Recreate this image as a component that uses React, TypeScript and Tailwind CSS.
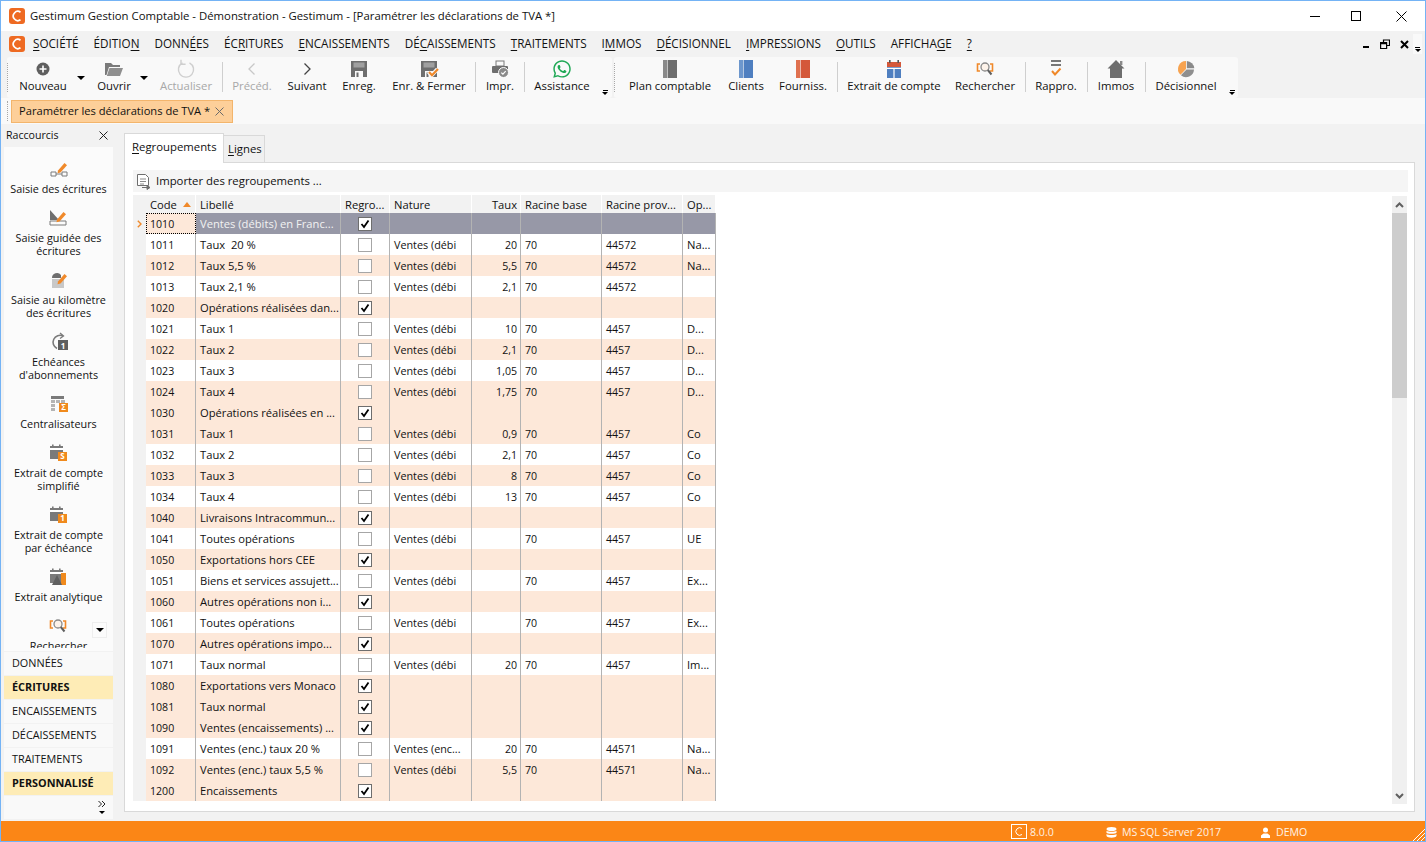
import type { ReactNode } from 'react'
import { FaWhatsapp } from 'react-icons/fa'

type Row = [string, string, boolean, string, string, string, string, string, boolean]

const rows: Row[] = [
  ['1011', 'Taux  20 %', false, 'Ventes (débi', '20', '70', '44572', 'Na...', false],
  ['1012', 'Taux 5,5 %', false, 'Ventes (débi', '5,5', '70', '44572', 'Na...', true],
  ['1013', 'Taux 2,1 %', false, 'Ventes (débi', '2,1', '70', '44572', '', false],
  ['1020', 'Opérations réalisées dan...', true, '', '', '', '', '', true],
  ['1021', 'Taux 1', false, 'Ventes (débi', '10', '70', '4457', 'D...', false],
  ['1022', 'Taux 2', false, 'Ventes (débi', '2,1', '70', '4457', 'D...', true],
  ['1023', 'Taux 3', false, 'Ventes (débi', '1,05', '70', '4457', 'D...', false],
  ['1024', 'Taux 4', false, 'Ventes (débi', '1,75', '70', '4457', 'D...', true],
  ['1030', 'Opérations réalisées en ...', true, '', '', '', '', '', true],
  ['1031', 'Taux 1', false, 'Ventes (débi', '0,9', '70', '4457', 'Co', true],
  ['1032', 'Taux 2', false, 'Ventes (débi', '2,1', '70', '4457', 'Co', false],
  ['1033', 'Taux 3', false, 'Ventes (débi', '8', '70', '4457', 'Co', true],
  ['1034', 'Taux 4', false, 'Ventes (débi', '13', '70', '4457', 'Co', false],
  ['1040', 'Livraisons Intracommun...', true, '', '', '', '', '', true],
  ['1041', 'Toutes opérations', false, 'Ventes (débi', '', '70', '4457', 'UE', false],
  ['1050', 'Exportations hors CEE', true, '', '', '', '', '', true],
  ['1051', 'Biens et services assujett...', false, 'Ventes (débi', '', '70', '4457', 'Ex...', false],
  ['1060', 'Autres opérations non i...', true, '', '', '', '', '', true],
  ['1061', 'Toutes opérations', false, 'Ventes (débi', '', '70', '4457', 'Ex...', false],
  ['1070', 'Autres opérations impo...', true, '', '', '', '', '', true],
  ['1071', 'Taux normal', false, 'Ventes (débi', '20', '70', '4457', 'Im...', false],
  ['1080', 'Exportations vers Monaco', true, '', '', '', '', '', true],
  ['1081', 'Taux normal', true, '', '', '', '', '', true],
  ['1090', 'Ventes (encaissements) ...', true, '', '', '', '', '', true],
  ['1091', 'Ventes (enc.) taux 20 %', false, 'Ventes (enc...', '20', '70', '44571', 'Na...', false],
  ['1092', 'Ventes (enc.) taux 5,5 %', false, 'Ventes (débi', '5,5', '70', '44571', 'Na...', true],
  ['1200', 'Encaissements', true, '', '', '', '', '', true],
]

const Logo = () => (
  <svg width="16" height="16" viewBox="0 0 16 16">
    <rect width="16" height="16" rx="3" fill="#ee6a22" />
    <path d="M11.5 4.2A4.6 4.6 0 1 0 11.5 11.8" fill="none" stroke="#fff" strokeWidth="1.7" />
  </svg>
)

const Icon = ({ children }: { children: ReactNode }) => (
  <svg width="20" height="20" viewBox="0 0 20 20" className="shrink-0">
    {children}
  </svg>
)

const Floppy = () => (
  <>
    <rect x="2" y="2" width="16" height="16" fill="#6e6e6e" />
    <rect x="4.500" y="3.500" width="11" height="5" fill="#a0a0a0" />
    <rect x="6" y="12" width="8" height="6" fill="#f9f9f9" />
    <rect x="7.500" y="13.500" width="2" height="4.500" fill="#6e6e6e" />
  </>
)

const Pen = () => <path d="M9 11.5 15.5 4 18 6.2 11.5 13.5 8.5 14.3Z" fill="#f0892a" />

const Calendar = () => (
  <>
    <rect x="2" y="3" width="13" height="13" fill="#7a7a7a" />
    <rect x="2" y="5" width="13" height="2" fill="#fff" />
    <rect x="4" y="1.5" width="1.6" height="3" fill="#7a7a7a" />
    <rect x="11" y="1.5" width="1.6" height="3" fill="#7a7a7a" />
  </>
)

const Search = () => (
  <>
    <path d="M5 5H2.500v7H5M15 5h2.500v7H15" fill="none" stroke="#f0892a" strokeWidth="1.600" />
    <circle cx="10" cy="8" r="4" fill="#fdf3ea" stroke="#8a8a8a" strokeWidth="1.300" />
    <path d="m12.800 11 3.700 4.500" stroke="#5f5f5f" strokeWidth="2" />
  </>
)

const Badge = ({ label }: { label: string }) => (
  <>
    <rect x="10" y="9" width="9" height="9" fill="#f08a1d" />
    <text x="14.5" y="16.4" textAnchor="middle" fontSize="8" fontWeight="700" fill="#fff">
      {label}
    </text>
  </>
)

const toolIcons = {
  plus: (
    <Icon>
      <circle cx="10" cy="10" r="6.500" fill="#5f5f5f" />
      <path d="M10 6.500v7M6.500 10h7" stroke="#fff" strokeWidth="1.600" />
    </Icon>
  ),
  folder: (
    <Icon>
      <path d="M1 4h6l2 2h7v2H5L2.500 16H1z" fill="#7a7a7a" />
      <path d="M5.500 9H19l-3 8H2.800z" fill="#8f8f8f" />
    </Icon>
  ),
  refresh: (
    <Icon>
      <path d="M6.500 3.800a7.600 7.600 0 1 0 7 0" fill="none" stroke="#cfcfcf" strokeWidth="1.400" />
      <path d="M5 .8v4.400h4.600" fill="none" stroke="#cfcfcf" strokeWidth="1.400" />
    </Icon>
  ),
  prev: (
    <Icon>
      <path d="m12.500 4.500-5.500 5.500 5.500 5.500" fill="none" stroke="#c8c8c8" strokeWidth="1.300" />
    </Icon>
  ),
  next: (
    <Icon>
      <path d="m7.500 4.500 5.500 5.500-5.500 5.500" fill="none" stroke="#444" strokeWidth="1.300" />
    </Icon>
  ),
  save: (
    <Icon>
      <Floppy />
    </Icon>
  ),
  saveClose: (
    <Icon>
      <Floppy />
      <path d="m9.500 13 3.200 3.400L18.500 10" fill="none" stroke="#f9f9f9" strokeWidth="4" />
      <path d="m10 13 3 3.200L19 10" fill="none" stroke="#f0892a" strokeWidth="2.200" />
    </Icon>
  ),
  print: (
    <Icon>
      <rect x="6" y="2" width="8" height="5" fill="none" stroke="#7a7a7a" />
      <rect x="2" y="7" width="16" height="7" rx="1" fill="#6e6e6e" />
      <circle cx="13.500" cy="13.500" r="5" fill="#8a8a8a" stroke="#fff" />
      <path d="m11.300 13.600 1.600 1.600 2.800-3" fill="none" stroke="#fff" strokeWidth="1.200" />
    </Icon>
  ),
  whatsapp: <FaWhatsapp className="h-5 w-5 shrink-0 text-[#1fa855]" />,
  greyBook: (
    <Icon>
      <rect x="3" y="1" width="4" height="18" fill="#8a8a8a" />
      <rect x="7.600" y="1" width="9.400" height="18" fill="#6e6e6e" />
    </Icon>
  ),
  blueBook: (
    <Icon>
      <rect x="3" y="1" width="4" height="18" fill="#6d97cd" />
      <rect x="7.600" y="1" width="9.400" height="18" fill="#4f7fc0" />
    </Icon>
  ),
  redBook: (
    <Icon>
      <rect x="3" y="1" width="4" height="18" fill="#e0714f" />
      <rect x="7.600" y="1" width="9.400" height="18" fill="#d4583a" />
    </Icon>
  ),
  statement: (
    <Icon>
      <rect x="3" y="3" width="14" height="5" fill="#d4583a" />
      <rect x="3" y="8" width="14" height="11" fill="#4f7fc0" />
      <rect x="5" y="1" width="1.600" height="3" fill="#555" />
      <rect x="13.400" y="1" width="1.600" height="3" fill="#555" />
      <path d="M3 9.300h14M10 9.300V19" stroke="#fff" strokeWidth="1.200" />
    </Icon>
  ),
  search: (
    <Icon>
      <Search />
    </Icon>
  ),
  reconcile: (
    <Icon>
      <path d="M5 2h10M5 6h10" stroke="#777" strokeWidth="1.800" />
      <path d="m6 12 3 3.400L14.500 9.500" fill="none" stroke="#f0892a" strokeWidth="2" />
    </Icon>
  ),
  home: (
    <Icon>
      <path d="M10 1 1.500 9.500H4V19h12V9.500h2.500z" fill="#6e6e6e" />
      <rect x="14" y="2" width="2.400" height="4" fill="#8a8a8a" />
    </Icon>
  ),
  pie: (
    <Icon>
      <path d="M10.800 9.200V2a8 8 0 0 1 7.500 7.200z" fill="#8a8a8a" />
      <path d="M10 2a8 8 0 0 0-5.500 13.800L10 10z" fill="#f7a350" />
      <path d="M4.900 16.300A8 8 0 0 0 18 10.500h-7.500z" fill="#8f8f8f" />
    </Icon>
  ),
}

const ToolButton = ({
  icon,
  label,
  width,
  disabled,
}: {
  icon: ReactNode
  label: string
  width: string
  disabled?: boolean
}) => (
  <div className={`flex shrink-0 flex-col items-center pt-[2px] ${width}`}>
    <div className="flex h-[20px] items-center justify-center">{icon}</div>
    <span className={`mt-[-1px] whitespace-nowrap leading-[16px] ${disabled ? 'text-[#a8a8a8]' : ''}`}>{label}</span>
  </div>
)

const Sep = ({ width }: { width: string }) => (
  <div className={`flex shrink-0 justify-center pt-[5px] pb-[6px] ${width}`}>
    <div className="h-full w-px bg-[#cfcfcf]" />
  </div>
)

const Caret = ({ width }: { width: string }) => (
  <div className={`flex shrink-0 justify-center pt-[19px] ${width}`}>
    <div className="h-0 w-0 border-x-[4px] border-t-[4px] border-x-transparent border-t-black" />
  </div>
)

const Overflow = ({ width }: { width: string }) => (
  <div className={`flex shrink-0 flex-col items-center justify-end pb-[3px] ${width}`}>
    <div className="h-px w-[5px] bg-black" />
    <div className="mt-px h-0 w-0 border-x-[3px] border-t-[3px] border-x-transparent border-t-black" />
  </div>
)

const Grip = () => <div className="my-[6px] w-0 shrink-0 border-l border-dotted border-[#a8a8a8]" />

const Mnemonic = ({ before, key_, after }: { before: string; key_: string; after: string }) => (
  <span className="whitespace-nowrap">
    {before}
    <span className="underline underline-offset-2">{key_}</span>
    {after}
  </span>
)

const menu: [string, string, string][] = [
  ['', 'S', 'OCIÉTÉ'],
  ['ÉDITIO', 'N', ''],
  ['DONN', 'É', 'ES'],
  ['ÉC', 'R', 'ITURES'],
  ['', 'E', 'NCAISSEMENTS'],
  ['DÉ', 'C', 'AISSEMENTS'],
  ['', 'T', 'RAITEMENTS'],
  ['I', 'M', 'MOS'],
  ['', 'D', 'ÉCISIONNEL'],
  ['', 'I', 'MPRESSIONS'],
  ['', 'O', 'UTILS'],
  ['AFFICHA', 'G', 'E'],
  ['', '?', ''],
]

const shortcuts: { icon: ReactNode; lines: string[] }[] = [
  {
    icon: (
      <>
        <path d="M2 13h5v4H2zM13 13h5v4h-5z" fill="none" stroke="#7a7a7a" />
        <path d="M7 15h6" stroke="#7a7a7a" />
        <Pen />
      </>
    ),
    lines: ['Saisie des écritures'],
  },
  {
    icon: (
      <>
        <path d="M2 2 11 12H2z" fill="#6e6e6e" />
        <path d="M2 13h16v4H2z" fill="none" stroke="#7a7a7a" />
        <Pen />
      </>
    ),
    lines: ['Saisie guidée des', 'écritures'],
  },
  {
    icon: (
      <>
        <path d="M3 8a5 5 0 0 1 9-3v3z" fill="#6e6e6e" />
        <rect x="3" y="9" width="12" height="9" fill="#c8c8c8" />
        <Pen />
      </>
    ),
    lines: ['Saisie au kilomètre', 'des écritures'],
  },
  {
    icon: (
      <>
        <path d="M8 16.500A6.500 6.500 0 1 1 14 4" fill="none" stroke="#7a7a7a" strokeWidth="1.600" />
        <path d="m11 1 3.500 3-3.500 2.500" fill="none" stroke="#7a7a7a" strokeWidth="1.300" />
        <rect x="9" y="8" width="10" height="10" fill="#5f5f5f" />
        <text x="14" y="16.500" textAnchor="middle" fontSize="8" fontWeight="700" fill="#fff">
          1
        </text>
      </>
    ),
    lines: ['Echéances', "d'abonnements"],
  },
  {
    icon: (
      <>
        <rect x="2" y="2" width="13" height="3" fill="#7a7a7a" />
        <path d="M2 6h4v3H2zM7 6h4v3H7zM12 6h4v3h-4zM2 10h4v3H2zM2 14h4v3H2z" fill="#b4b4b4" />
        <Badge label="Σ" />
      </>
    ),
    lines: ['Centralisateurs'],
  },
  {
    icon: (
      <>
        <Calendar />
        <Badge label="S" />
      </>
    ),
    lines: ['Extrait de compte', 'simplifié'],
  },
  {
    icon: (
      <>
        <Calendar />
        <Badge label="1" />
      </>
    ),
    lines: ['Extrait de compte', 'par échéance'],
  },
  {
    icon: (
      <>
        <Calendar />
        <rect x="13" y="6" width="5" height="12" fill="#f08a1d" />
        <path d="M9 8 14 18H4z" fill="#5f5f5f" />
      </>
    ),
    lines: ['Extrait analytique'],
  },
  { icon: <Search />, lines: ['Rechercher'] },
]

const sections: [string, boolean][] = [
  ['DONNÉES', false],
  ['ÉCRITURES', true],
  ['ENCAISSEMENTS', false],
  ['DÉCAISSEMENTS', false],
  ['TRAITEMENTS', false],
  ['PERSONNALISÉ', true],
]

const Check = ({ checked }: { checked: boolean }) => (
  <div
    className={`flex h-[14px] w-[14px] items-center justify-center border bg-white ${
      checked ? 'border-[#6e6e6e]' : 'border-[#a6a6a6]'
    }`}
  >
    {checked && (
      <svg width="10" height="10" viewBox="0 0 10 10">
        <path d="m1.500 5 2.500 3 4.500-6.500" fill="none" stroke="#000" strokeWidth="1.800" />
      </svg>
    )}
  </div>
)

const Cells = ({ row, text }: { row: Row; text: string }) => (
  <>
    <div className={`flex w-[145px] items-center border-r border-[#b3b3b3] pt-px pl-[4px] text-[11.2px] whitespace-pre ${text}`}>{row[1]}</div>
    <div className="flex w-[49px] items-center border-r border-[#b3b3b3] pl-[17px]">
      <Check checked={row[2]} />
    </div>
    <div className="flex w-[82px] items-center border-r border-[#b3b3b3] pt-px pl-[4px] text-[10.8px] whitespace-pre">{row[3]}</div>
    <div className="flex w-[49px] items-center justify-end border-r border-[#b3b3b3] pt-[2px] pr-[3px] text-[10.6px]">{row[4]}</div>
    <div className="flex w-[81px] items-center border-r border-[#b3b3b3] pt-[2px] pl-[4px] text-[10.6px]">{row[5]}</div>
    <div className="flex w-[81px] items-center border-r border-[#b3b3b3] pt-[2px] pl-[4px] text-[10.6px]">{row[6]}</div>
    <div className="flex w-[33px] items-center border-r border-[#b3b3b3] pt-px pl-[4px] text-[11.2px]">{row[7]}</div>
  </>
)

const Th = ({ label, width, right }: { label: string; width: string; right?: boolean }) => (
  <div
    className={`flex items-center border-r border-white pt-[3px] whitespace-nowrap ${width} ${
      right ? 'justify-end pr-[3px]' : 'pl-[4px]'
    }`}
  >
    {label}
  </div>
)

export default function App() {
  return (
    <div className="flex h-[842px] w-[1426px] flex-col overflow-hidden border-x border-t border-b border-[#74b3f5] bg-[#f2f2f2] font-['Open_Sans','Noto_Sans',sans-serif] text-[11.35px] text-[#111]">
      <header className="flex h-[30px] shrink-0 items-center bg-white pl-[8px]">
        <Logo />
        <span className="ml-[5px] whitespace-nowrap">
          Gestimum Gestion Comptable - Démonstration - Gestimum - [Paramétrer les déclarations de TVA *]
        </span>
        <div className="ml-auto flex items-center">
          <div className="h-px w-[10px] bg-black" />
          <div className="ml-[31px] h-[10px] w-[10px] border border-black" />
          <svg width="11" height="11" viewBox="0 0 11 11" className="mr-[18px] ml-[35px]">
            <path d="m.5.5 10 10m0-10-10 10" stroke="#000" />
          </svg>
        </div>
      </header>

      <nav className="flex h-[26px] shrink-0 items-center pl-[8px]">
        <Logo />
        <div className="ml-[8px] flex gap-[15px] text-[11.7px]">
          {menu.map(([a, b, c]) => (
            <Mnemonic key={a + b + c} before={a} key_={b} after={c} />
          ))}
        </div>
        <div className="ml-auto flex items-center">
          <div className="mt-[6px] h-[2px] w-[6px] bg-black" />
          <svg width="10" height="10" viewBox="0 0 10 10" className="ml-[11px]">
            <path d="M3.500 3V1h6v5.500H7" fill="none" stroke="#000" strokeWidth="1.200" />
            <path d="M.6 3.500h6v6h-6z" fill="none" stroke="#000" strokeWidth="1.200" />
            <path d="M.6 4.500h6" stroke="#000" strokeWidth="1.500" />
          </svg>
          <svg width="9" height="9" viewBox="0 0 9 9" className="ml-[10px]">
            <path d="m1 1 7 7m0-7-7 7" stroke="#000" strokeWidth="2" />
          </svg>
          <div className="mr-[3px] ml-[4px] flex h-[20px] w-[9px] flex-col items-center justify-end bg-[#f9f9f9] pb-[2px]">
            <div className="h-px w-[5px] bg-black" />
            <div className="mt-px h-0 w-0 border-x-[3px] border-t-[3px] border-x-transparent border-t-black" />
          </div>
        </div>
      </nav>

      <div className="flex h-[41px] shrink-0 pl-[6px]">
        <div className="flex w-[605px] rounded-[3px] bg-[#f9f9f9]">
          <Grip />
          <ToolButton icon={toolIcons.plus} label="Nouveau" width="ml-[6px] w-[58px]" />
          <Caret width="w-[18px]" />
          <ToolButton icon={toolIcons.folder} label="Ouvrir" width="w-[48px]" />
          <Caret width="w-[12px]" />
          <ToolButton icon={toolIcons.refresh} label="Actualiser" width="w-[72px]" disabled />
          <Sep width="w-px" />
          <ToolButton icon={toolIcons.prev} label="Précéd." width="w-[58px]" disabled />
          <ToolButton icon={toolIcons.next} label="Suivant" width="w-[52px]" />
          <ToolButton icon={toolIcons.save} label="Enreg." width="w-[52px]" />
          <ToolButton icon={toolIcons.saveClose} label="Enr. & Fermer" width="w-[88px]" />
          <Sep width="w-[4px]" />
          <ToolButton icon={toolIcons.print} label="Impr." width="w-[46px]" />
          <Sep width="w-[2px]" />
          <ToolButton icon={toolIcons.whatsapp} label="Assistance" width="w-[74px]" />
          <Overflow width="w-[12px]" />
        </div>
        <div className="ml-[2px] flex w-[624px] rounded-[3px] bg-[#f9f9f9]">
          <Grip />
          <ToolButton icon={toolIcons.greyBook} label="Plan comptable" width="ml-[3px] w-[104px]" />
          <ToolButton icon={toolIcons.blueBook} label="Clients" width="w-[48px]" />
          <ToolButton icon={toolIcons.redBook} label="Fourniss." width="w-[66px]" />
          <Sep width="w-[2px]" />
          <ToolButton icon={toolIcons.statement} label="Extrait de compte" width="w-[112px]" />
          <ToolButton icon={toolIcons.search} label="Rechercher" width="w-[70px]" />
          <Sep width="w-[10px]" />
          <ToolButton icon={toolIcons.reconcile} label="Rappro." width="w-[52px]" />
          <Sep width="w-[10px]" />
          <ToolButton icon={toolIcons.home} label="Immos" width="w-[48px]" />
          <Sep width="w-[10px]" />
          <ToolButton icon={toolIcons.pie} label="Décisionnel" width="w-[72px]" />
          <Overflow width="ml-[4px] w-[12px]" />
        </div>
      </div>

      <div className="flex h-[26px] shrink-0 items-center bg-[#f9f9f9] pl-[6px]">
        <div className="h-[20px] border-l border-dotted border-[#a8a8a8]" />
        <div className="ml-[3px] flex h-[23px] w-[222px] items-center border border-[#f3b56c] bg-[#fdcf99] pl-[7px] text-[11.15px]">
          <span className="whitespace-nowrap">Paramétrer les déclarations de TVA *</span>
          <svg width="9" height="9" viewBox="0 0 9 9" className="ml-[5px]">
            <path d="m.5.5 8 8m0-8-8 8" stroke="#6a6a6a" />
          </svg>
        </div>
      </div>

      <div className="flex min-h-0 flex-1">
        <aside className="flex w-[123px] shrink-0 flex-col pl-[3px]">
          <div className="flex h-[21px] w-[109px] shrink-0 items-center justify-between pt-[2px] pl-[2px] text-[10.6px]">
            <span>Raccourcis</span>
            <svg width="9" height="9" viewBox="0 0 9 9" className="mr-[5px]">
              <path d="m.5.5 8 8m0-8-8 8" stroke="#222" />
            </svg>
          </div>
          <div className="relative mt-[2px] h-[504px] w-[109px] shrink-0 overflow-hidden bg-[#fbfbfb]">
            <div className="flex h-[501px] flex-col items-center gap-[13px] overflow-hidden pt-[12px] text-[10.8px] leading-[13px]">
              {shortcuts.map((s) => (
                <div key={s.lines[0]} className="flex flex-col items-center gap-[3px] text-center">
                  <Icon>{s.icon}</Icon>
                  <div>
                    {s.lines.map((l) => (
                      <div key={l} className="whitespace-nowrap">
                        {l}
                      </div>
                    ))}
                  </div>
                </div>
              ))}
            </div>
            <div className="absolute top-[475px] left-[88px] flex h-[16px] w-[15px] items-center justify-center border border-[#eeeeee] bg-[#fbfbfb]">
              <div className="h-0 w-0 border-x-[4px] border-t-[4px] border-x-transparent border-t-black" />
            </div>
          </div>
          <div className="flex w-[109px] flex-col pt-px">
            {sections.map(([label, active]) => (
              <div
                key={label}
                className={`flex h-[24px] items-center border-b border-[#f2f2f2] pb-px pl-[8px] text-[10.85px] ${
                  active ? 'bg-[#feecb6] font-bold' : 'bg-[#f9f9f9]'
                }`}
              >
                {label}
              </div>
            ))}
            <div className="flex h-[23px] flex-col items-end bg-[#f9f9f9] pt-[4px] pr-[7px]">
              <svg width="8" height="8" viewBox="0 0 8 8">
                <path d="m.5 1 3 3-3 3M4 1l3 3-3 3" fill="none" stroke="#222" />
              </svg>
              <div className="mt-[3px] mr-px h-0 w-0 border-x-[3px] border-t-[3px] border-x-transparent border-t-black" />
            </div>
          </div>
        </aside>

        <main className="flex min-w-0 flex-1 flex-col pt-[9px] pr-[10px] pb-[9px]">
          <div className="flex h-[29px] shrink-0 items-end">
            <div className="relative z-10 -mb-px flex h-[30px] w-[100px] items-center border border-b-0 border-[#d9d9d9] bg-white pb-[3px] pl-[7px]">
              <Mnemonic before="" key_="R" after="egroupements" />
            </div>
            <div className="flex h-[27px] w-[41px] items-center border-t border-r border-[#d9d9d9] bg-[#f0f0f0] pl-[4px]">
              <Mnemonic before="" key_="L" after="ignes" />
            </div>
          </div>
          <section className="flex min-h-0 flex-1 flex-col border border-[#d9d9d9] bg-white pt-[7px] pr-[6px] pl-[8px]">
            <div className="flex h-[22px] shrink-0 items-center bg-[#f5f5f5] pl-[3px]">
              <svg width="16" height="17" viewBox="0 0 16 17">
                <path d="M1.500 1.500h8l3 3v8h-11z" fill="#fff" stroke="#6e6e6e" />
                <path d="M4 6h6M4 8.500h6M4 11h4" stroke="#8a8a8a" />
                <path d="M6 14.500h7M11 12.500l3 2-3 2z" fill="#6e6e6e" stroke="#6e6e6e" />
              </svg>
              <span className="ml-[4px] whitespace-nowrap">Importer des regroupements ...</span>
            </div>
            <div className="mt-[3px] flex min-h-0 flex-1">
              <div className="flex w-[583px] shrink-0 flex-col">
                <div className="flex h-[18px] shrink-0 bg-[#f2f2f2] text-[11.2px]">
                  <div className="w-[13px] shrink-0" />
                  <div className="flex w-[50px] items-center border-r border-white pt-[3px] pl-[4px]">
                    Code
                    <div className="mb-[2px] ml-[6px] h-0 w-0 border-x-[4px] border-b-[5px] border-x-transparent border-b-[#f0892a]" />
                  </div>
                  <Th label="Libellé" width="w-[145px]" />
                  <Th label="Regro..." width="w-[49px]" />
                  <Th label="Nature" width="w-[82px]" />
                  <Th label="Taux" width="w-[49px]" right />
                  <Th label="Racine base" width="w-[81px]" />
                  <Th label="Racine prov..." width="w-[81px]" />
                  <Th label="Op..." width="w-[33px]" />
                </div>
                <div className="flex h-[21px] shrink-0">
                  <div className="flex w-[13px] shrink-0 items-center justify-center bg-[#f2f2f2]">
                    <svg width="5" height="8" viewBox="0 0 5 8">
                      <path d="m.8.8 3.200 3.200L.8 7.200" fill="none" stroke="#f0892a" strokeWidth="1.400" />
                    </svg>
                  </div>
                  <div className="flex w-[50px] items-center border border-dotted border-black bg-[#fde8d9] pt-[2px] pl-[3px] text-[10.6px]">
                    1010
                  </div>
                  <div className="flex flex-1 bg-[#9798a7]">
                    <Cells row={['1010', 'Ventes (débits) en Franc...', true, '', '', '', '', '', true]} text="text-[#f2f2f2]" />
                  </div>
                </div>
                {rows.map((row) => (
                  <div key={row[0]} className="flex h-[21px] shrink-0">
                    <div className="w-[13px] shrink-0 bg-[#f2f2f2]" />
                    <div className={`flex flex-1 ${row[8] ? 'bg-[#fde8d9]' : 'bg-white'}`}>
                      <div className="flex w-[50px] items-center border-r border-[#b3b3b3] pt-[2px] pl-[4px] text-[10.6px]">{row[0]}</div>
                      <Cells row={row} text="" />
                    </div>
                  </div>
                ))}
              </div>
              <div className="mt-px mr-px ml-auto flex h-[608px] w-[15px] shrink-0 flex-col bg-[#f0f0f0]">
                <div className="flex h-[17px] shrink-0 items-center justify-center">
                  <svg width="9" height="6" viewBox="0 0 9 6">
                    <path d="m1 5 3.500-3.500L8 5" fill="none" stroke="#606060" strokeWidth="2" />
                  </svg>
                </div>
                <div className="h-[185px] shrink-0 bg-[#cdcdcd]" />
                <div className="mt-auto flex h-[17px] shrink-0 items-center justify-center">
                  <svg width="9" height="6" viewBox="0 0 9 6">
                    <path d="m1 1 3.500 3.500L8 1" fill="none" stroke="#606060" strokeWidth="2" />
                  </svg>
                </div>
              </div>
            </div>
          </section>
        </main>
      </div>

      <footer className="flex h-[20px] shrink-0 items-center bg-[#fb8616] text-[10.6px] text-[#fff3e6]">
        <div className="mt-px ml-[1010px] flex h-[15px] w-[16px] items-center justify-center border border-white">
          <svg width="9" height="9" viewBox="0 0 9 9">
            <path d="M7 1.500A3.800 3.800 0 1 0 7 7.500" fill="none" stroke="#fff" />
          </svg>
        </div>
        <span className="ml-[3px] w-[76px] pt-[3px]">8.0.0</span>
        <svg width="11" height="11" viewBox="0 0 11 11" className="mt-[2px]">
          <ellipse cx="5.500" cy="2" rx="5" ry="2" fill="#fff" />
          <path d="M.5 3.700c1 1.300 9 1.300 10 0v2c-1 1.300-9 1.300-10 0zM.5 7c1 1.300 9 1.300 10 0v2c-1 2.300-9 2.300-10 0z" fill="#fff" />
        </svg>
        <span className="ml-[5px] w-[139px] pt-[3px] whitespace-nowrap">MS SQL Server 2017</span>
        <svg width="9" height="11" viewBox="0 0 9 11" className="mt-[2px]">
          <circle cx="4.500" cy="3" r="2.500" fill="#fff" />
          <path d="M0 11V8.500L2.500 6.500h4L9 8.500V11z" fill="#fff" />
        </svg>
        <span className="ml-[6px] pt-[3px]">DEMO</span>
        <svg width="13" height="13" viewBox="0 0 13 13" className="mt-[7px] ml-auto">
          <path d="M13 1 1 13M13 5 5 13M13 9 9 13" stroke="#fff" />
        </svg>
      </footer>
    </div>
  )
}
